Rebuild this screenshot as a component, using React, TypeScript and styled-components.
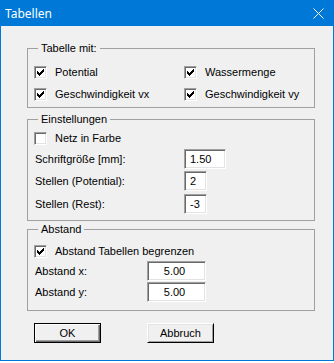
import styled, { createGlobalStyle } from "styled-components";

const GlobalStyle = createGlobalStyle`
  html, body {
    margin: 0;
    padding: 0;
    background: #ffffff;
  }
  body {
    font-family: "Liberation Sans", Arial, sans-serif;
    font-size: 11px;
  }
`

const Window = styled.div`
  width: 334px;
  height: 361px;
  box-sizing: border-box;
  border: 1px solid #0078d7;
  border-top: none;
  background: #f0f0f0;
  display: flex;
  flex-direction: column;
`

const TitleBar = styled.div`
  height: 26px;
  margin: 0 -1px;
  background: #0078d7;
  color: #ffffff;
  display: flex;
  align-items: center;
  justify-content: space-between;
  padding: 0 10px 0 5px;
  font-family: "Noto Sans", "Open Sans", sans-serif;
  font-size: 12px;
`

const CloseIcon = styled.svg`
  display: block;
  margin-top: 1px;
`

const Body = styled.div`
  display: flex;
  flex-direction: column;
  padding: 22px 0 0 26px;
`

const Group = styled.div<{ $pad: string; $mt?: number }>`
  position: relative;
  width: 288px;
  box-sizing: border-box;
  border: 1px solid #a0a0a0;
  padding: ${(p) => p.$pad};
  margin-top: ${(p) => p.$mt || 0}px;
`

const Legend = styled.span`
  position: absolute;
  top: -7px;
  left: 10px;
  padding: 0 3px;
  line-height: 13px;
  background: #f0f0f0;
  color: #000000;
`

const CheckGrid = styled.div`
  display: grid;
  grid-template-columns: 150px auto;
  row-gap: 9px;
`

const CheckRow = styled.label`
  display: flex;
  align-items: center;
  gap: 8px;
  height: 13px;
  line-height: 13px;
  color: #000000;
  white-space: nowrap;
`

const Box = styled.span`
  width: 13px;
  height: 13px;
  box-sizing: border-box;
  border-top: 1px solid #a0a0a0;
  border-left: 1px solid #a0a0a0;
  border-bottom: 1px solid #ffffff;
  border-right: 1px solid #ffffff;
  box-shadow: inset 1px 1px #696969, inset -1px -1px #e3e3e3;
  background: #ffffff;
  display: flex;
  align-items: center;
  justify-content: center;
  flex: none;
`

const FieldRow = styled.div<{ $label: number; $mt: number }>`
  display: grid;
  grid-template-columns: ${(p) => p.$label}px auto;
  align-items: center;
  margin-top: ${(p) => p.$mt}px;
  color: #000000;
`

const Label = styled.span`
  padding-left: 1px;
  white-space: nowrap;
`

const Edit = styled.div<{ $w: number; $center?: boolean }>`
  width: ${(p) => p.$w}px;
  height: 20px;
  box-sizing: border-box;
  border-top: 1px solid #a0a0a0;
  border-left: 1px solid #a0a0a0;
  border-bottom: 1px solid #ffffff;
  border-right: 1px solid #ffffff;
  box-shadow: inset 1px 1px #696969, inset -1px -1px #e3e3e3;
  background: #ffffff;
  display: flex;
  align-items: center;
  justify-content: ${(p) => (p.$center ? "center" : "flex-start")};
  padding: ${(p) => (p.$center ? "0 4px 0 0" : "0 0 0 5px")};
  color: #000000;
`

const Buttons = styled.div`
  display: flex;
  gap: 46px;
  margin-top: 12px;
  padding-left: 7px;
`

const Button = styled.button<{ $default?: boolean }>`
  width: 67px;
  height: 20px;
  box-sizing: border-box;
  padding: 0;
  background: #f0f0f0;
  font-family: "Liberation Sans", Arial, sans-serif;
  font-size: 11px;
  color: #000000;
  border-top: 1px solid ${(p) => (p.$default ? "#000000" : "#ffffff")};
  border-left: 1px solid ${(p) => (p.$default ? "#000000" : "#ffffff")};
  border-bottom: 1px solid #000000;
  border-right: 1px solid #000000;
  box-shadow: ${(p) =>
    p.$default
      ? "inset 1px 1px #ffffff, inset -1px -1px #696969, inset -2px -2px #a0a0a0"
      : "inset 1px 1px #e3e3e3, inset -1px -1px #a0a0a0"};
`

const Check = ({ on }: { on: boolean }) => (
  <Box>
    {on && (
      <svg width="7" height="7" viewBox="0 0 7 7" shapeRendering="crispEdges">
        <path
          d="M0 2h1v3H0z M1 3h1v3H1z M2 4h1v3H2z M3 3h1v3H3z M4 2h1v3H4z M5 1h1v3H5z M6 0h1v3H6z"
          fill="#000000"
        />
      </svg>
    )}
  </Box>
)

export default function App() {
  return (
    <>
      <GlobalStyle />
      <Window>
        <TitleBar>
          <span>Tabellen</span>
          <CloseIcon width="11" height="11" viewBox="0 0 11 11">
            <path d="M0.5 0.5L10.5 10.5M10.5 0.5L0.5 10.5" stroke="#ffffff" strokeWidth="1" />
          </CloseIcon>
        </TitleBar>
        <Body>
          <Group $pad="17px 0 6px 6px">
            <Legend>Tabelle mit:</Legend>
            <CheckGrid>
              <CheckRow><Check on />Potential</CheckRow>
              <CheckRow><Check on />Wassermenge</CheckRow>
              <CheckRow><Check on />Geschwindigkeit vx</CheckRow>
              <CheckRow><Check on />Geschwindigkeit vy</CheckRow>
            </CheckGrid>
          </Group>

          <Group $pad="12px 0 6px 6px" $mt={11}>
            <Legend>Einstellungen</Legend>
            <CheckRow><Check on={false} />Netz in Farbe</CheckRow>
            <FieldRow $label={150} $mt={4}>
              <Label>Schriftgröße [mm]:</Label>
              <Edit $w={42}>1.50</Edit>
            </FieldRow>
            <FieldRow $label={150} $mt={2}>
              <Label>Stellen (Potential):</Label>
              <Edit $w={23}>2</Edit>
            </FieldRow>
            <FieldRow $label={150} $mt={3}>
              <Label>Stellen (Rest):</Label>
              <Edit $w={23}>-3</Edit>
            </FieldRow>
          </Group>

          <Group $pad="15px 0 8px 6px" $mt={8}>
            <Legend>Abstand</Legend>
            <CheckRow><Check on />Abstand Tabellen begrenzen</CheckRow>
            <FieldRow $label={113} $mt={3}>
              <Label>Abstand x:</Label>
              <Edit $w={59} $center>5.00</Edit>
            </FieldRow>
            <FieldRow $label={113} $mt={1}>
              <Label>Abstand y:</Label>
              <Edit $w={59} $center>5.00</Edit>
            </FieldRow>
          </Group>

          <Buttons>
            <Button $default>OK</Button>
            <Button>Abbruch</Button>
          </Buttons>
        </Body>
      </Window>
    </>
  );
}
